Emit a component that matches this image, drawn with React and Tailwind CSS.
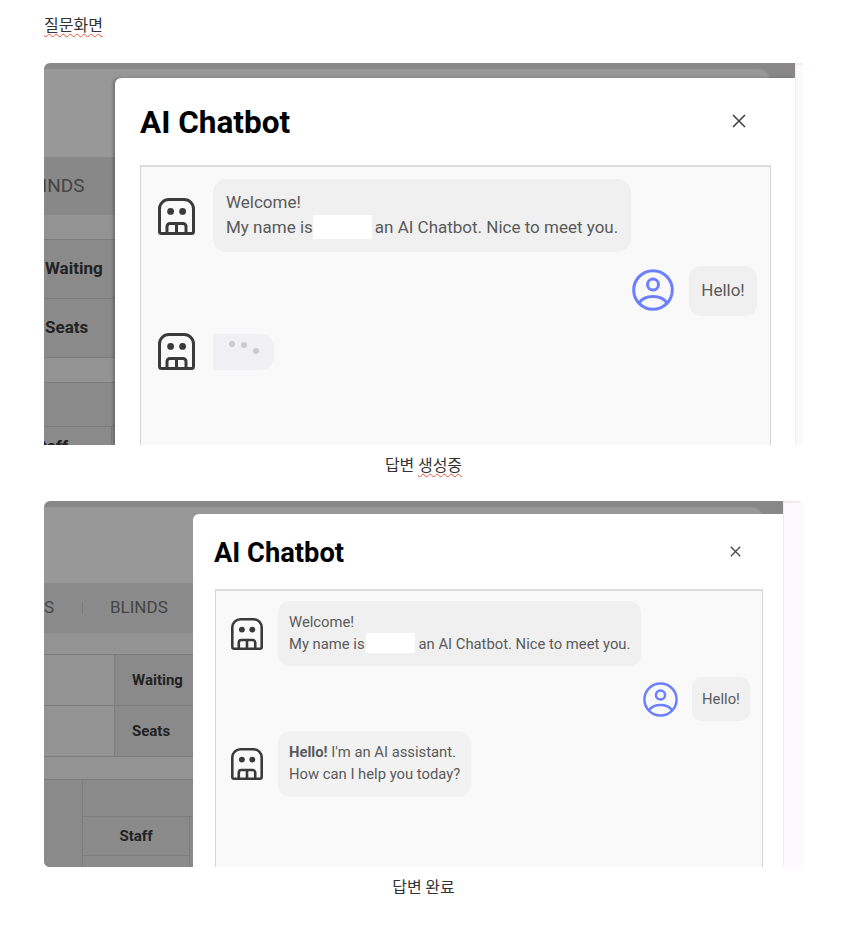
import React from 'react'

const KOREAN = "font-['Noto_Sans_CJK_KR','Noto_Sans',sans-serif]"

// Robot face used for the assistant avatar
function BotIcon({ className }) {
  return (
    <svg viewBox="0 0 37 37" fill="none" stroke="#3a3a3a" strokeWidth="3" className={className}>
      <path d="M1.5 11a9.5 9.5 0 0 1 9.5-9.5h15a9.5 9.5 0 0 1 9.5 9.5v22.5a2 2 0 0 1-2 2h-30a2 2 0 0 1-2-2z" />
      <circle cx="12.6" cy="13.4" r="3.4" fill="#3a3a3a" stroke="none" />
      <circle cx="24.6" cy="13.4" r="3.4" fill="#3a3a3a" stroke="none" />
      <path d="M9 35v-6.5a3 3 0 0 1 3-3h13a3 3 0 0 1 3 3V35M18.5 25.5V35" />
    </svg>
  )
}

function UserIcon({ className }) {
  return (
    <svg viewBox="0 0 42 42" fill="none" stroke="#6b7fff" strokeWidth="3" className={className}>
      <circle cx="21" cy="21" r="19.3" />
      <circle cx="21" cy="15.6" r="5.5" />
      <path d="M7 34c3-4.500 8-6.500 14-6.500s11 2 14 6.500" />
    </svg>
  )
}

function CloseIcon({ className }) {
  return (
    <svg viewBox="0 0 14 14" fill="none" stroke="#444" strokeWidth="1.6" className={className}>
      <path d="M1 1l12 12M13 1L1 13" />
    </svg>
  )
}

function Cell({ className, children }) {
  return (
    <div className={`flex items-center whitespace-nowrap border-[#7c7c7c] font-bold text-[#222] ${className}`}>
      {children}
    </div>
  )
}

function QuestionShot() {
  return (
    <div className="relative flex h-[382px] w-[759px] overflow-hidden rounded-tl-md">
      <div className="h-full w-[751px] overflow-hidden bg-[#888] pt-[6px] pr-[25px]">
        <div className="h-full rounded-tr-xl bg-[#989898] pt-[88px] font-['Roboto',sans-serif]">
          <div className="flex h-[58px] items-center overflow-hidden bg-[#888]">
            <span className="-ml-[24px] whitespace-nowrap text-[19px] text-[#444]">BLINDS</span>
          </div>
          <div className="h-[25px] border-b border-[#7c7c7c] bg-[#939393]" />
          <Cell className="h-[59px] border-b bg-[#8a8a8a] pl-[1px] text-[17px]">Waiting</Cell>
          <Cell className="h-[59px] border-b bg-[#8a8a8a] pl-[1px] text-[17px]">Seats</Cell>
          <div className="h-[25px] border-b border-[#7c7c7c] bg-[#939393]" />
          <div className="h-[44px] border-b border-[#7c7c7c] bg-[#8a8a8a]" />
          <div className="flex h-[40px] bg-[#8a8a8a]">
            <div className="flex w-[68px] justify-end overflow-hidden border-r border-[#7c7c7c] pt-[7px] pr-[43px]">
              <span className="whitespace-nowrap text-[17px] font-bold text-[#222]">Staff</span>
            </div>
          </div>
        </div>
      </div>
      <div className="h-full flex-1 border-t-2 border-l border-[#f8ecee] bg-[#fcf9fc]" />

      <div className="absolute top-[15px] right-[8px] bottom-0 w-[680px] rounded-tl-md bg-white pr-[24px] pl-[25px] shadow-[-2px_0_3px_rgba(0,0,0,0.25)] font-['Roboto',sans-serif]">
        <div className="flex h-[87px] items-center justify-between pt-[3px] pr-[25px]">
          <h2 className="text-[31.5px] font-bold text-black">AI Chatbot</h2>
          <CloseIcon className="mb-[5px] h-[14px] w-[14px]" />
        </div>
        <div className="flex h-[300px] flex-col border border-t-2 border-[#d4d4d4] border-t-[#dedede] bg-[#f9f9f9] pt-[12px] pr-[13px] pl-[13px] text-[17px] leading-[25px] text-[#5a5a5a]">
          <div className="flex items-center gap-[18px] pl-[4px]">
            <BotIcon className="mt-[2px] h-[37px] w-[37px]" />
            <div className="rounded-[14px] bg-[#f0f0f0] px-[13px] pt-[11px] pb-[12px]">
              <p>Welcome!</p>
              <p className="flex">
                My name is
                <span className="mr-[3px] h-[24px] w-[59px] bg-white" />
                an AI Chatbot. Nice to meet you.
              </p>
            </div>
          </div>
          <div className="mt-[14px] flex items-center justify-end gap-[15px]">
            <UserIcon className="mb-[2px] h-[42px] w-[42px]" />
            <div className="flex h-[50px] w-[68px] items-center justify-center rounded-[12px] bg-[#f0f0f0] pb-[2px]">Hello!</div>
          </div>
          <div className="mt-[17px] flex items-center gap-[18px] pl-[4px]">
            <BotIcon className="h-[37px] w-[37px]" />
            <div className="flex h-[36px] w-[61px] items-start gap-[6px] rounded-[14px] rounded-tl-[4px] rounded-bl-[4px] bg-[#f1f1f5] pt-[7px] pl-[16px]">
              <span className="h-[6px] w-[6px] rounded-full bg-[#cbcbcb]" />
              <span className="mt-[1px] h-[6px] w-[6px] rounded-full bg-[#cbcbcb]" />
              <span className="mt-[7px] h-[6px] w-[6px] rounded-full bg-[#cbcbcb]" />
            </div>
          </div>
        </div>
      </div>
    </div>
  )
}

function AnswerShot() {
  return (
    <div className="relative flex h-[366px] w-[759px] overflow-hidden rounded-t-md rounded-br-none">
      <div className="h-full w-[739px] overflow-hidden rounded-bl-md bg-[#888] pt-[6px] pr-[20px]">
        <div className="h-full rounded-tr-xl bg-[#989898] pt-[76px] font-['Roboto',sans-serif]">
          <div className="flex h-[50px] items-center overflow-hidden bg-[#8a8a8a] text-[17px] text-[#444]">
            <span className="w-[38px]">S</span>
            <span className="h-[12px] w-px bg-[#7c7c7c]" />
            <span className="ml-[27px]">BLINDS</span>
          </div>
          <div className="h-[22px] border-b border-[#7c7c7c] bg-[#939393]" />
          <div className="flex h-[51px] border-b border-[#7c7c7c]">
            <div className="w-[71px] border-r border-[#7c7c7c] bg-[#939393]" />
            <Cell className="flex-1 bg-[#8a8a8a] pl-[17px] text-[15px]">Waiting</Cell>
          </div>
          <div className="flex h-[51px] border-b border-[#7c7c7c]">
            <div className="w-[71px] border-r border-[#7c7c7c] bg-[#939393]" />
            <Cell className="flex-1 bg-[#8a8a8a] pl-[17px] text-[15px]">Seats</Cell>
          </div>
          <div className="h-[23px] border-b border-[#7c7c7c] bg-[#939393]" />
          <div className="flex h-[76px] bg-[#8a8a8a]">
            <div className="w-[39px] border-r border-[#7c7c7c]" />
            <div className="flex-1">
              <div className="h-[37px] border-b border-[#7c7c7c]" />
              <Cell className="h-[39px] w-[107px] justify-center border-r border-b text-[15px]">Staff</Cell>
            </div>
          </div>
          <div className="flex h-[20px] bg-[#8a8a8a]">
            <div className="w-[39px] border-r border-[#7c7c7c]" />
            <div className="w-[107px] border-r border-[#7c7c7c]" />
          </div>
        </div>
      </div>
      <div className="h-full flex-1 border-t-2 border-l border-[#f8e6ea] bg-[#fcfaff]" />

      <div className="absolute top-[13px] right-[20px] bottom-0 w-[590px] rounded-tl-md bg-white pr-[20px] pl-[22px] font-['Roboto',sans-serif]">
        <div className="flex h-[75px] items-center justify-between pt-[3px] pr-[22px]">
          <h2 className="-ml-px text-[27.3px] font-bold text-black">AI Chatbot</h2>
          <CloseIcon className="mb-[4px] h-[11px] w-[11px]" />
        </div>
        <div className="flex h-[300px] flex-col border border-t-2 border-[#d4d4d4] border-t-[#dedede] bg-[#f9f9f9] pt-[10px] pr-[12px] pl-[11px] text-[14.8px] leading-[22px] text-[#5a5a5a]">
          <div className="flex items-center gap-[15px] pl-[4px]">
            <BotIcon className="h-[32px] w-[32px]" />
            <div className="rounded-[12px] bg-[#f0f0f0] px-[11px] pt-[10px] pb-[11px]">
              <p>Welcome!</p>
              <p className="flex">
                My name is
                <span className="mr-[4px] ml-[1px] h-[20px] w-[49px] bg-white" />
                an AI Chatbot. Nice to meet you.
              </p>
            </div>
          </div>
          <div className="mt-[11px] flex items-center justify-end gap-[14px]">
            <UserIcon className="h-[35px] w-[35px]" />
            <div className="flex h-[44px] w-[58px] items-center justify-center rounded-[10px] bg-[#f0f0f0]">Hello!</div>
          </div>
          <div className="mt-[10px] flex items-center gap-[15px] pl-[4px]">
            <BotIcon className="h-[32px] w-[32px]" />
            <div className="rounded-[12px] bg-[#f2f2f2] px-[11px] pt-[10px] pb-[12px]">
              <p><b className="font-bold">Hello!</b> I'm an AI assistant.</p>
              <p>How can I help you today?</p>
            </div>
          </div>
        </div>
      </div>
    </div>
  )
}

export default function App() {
  return (
    <div className={`h-[930px] w-[846px] overflow-hidden bg-white pt-[13px] pl-[44px] text-[16px] text-[#333] ${KOREAN}`}>
      <p className="h-[50px] leading-[22px]">
        <span className="underline decoration-[#e2583e] decoration-wavy decoration-1 underline-offset-2">질문화면</span>
      </p>
      <QuestionShot />
      <p className="flex h-[56px] w-[759px] justify-center pt-[8px] leading-[22px]">
        답변&nbsp;<span className="underline decoration-[#e2583e] decoration-wavy decoration-1 underline-offset-2">생성중</span>
      </p>
      <AnswerShot />
      <p className="w-[759px] pt-[8px] text-center leading-[22px]">답변 완료</p>
    </div>
  )
}
